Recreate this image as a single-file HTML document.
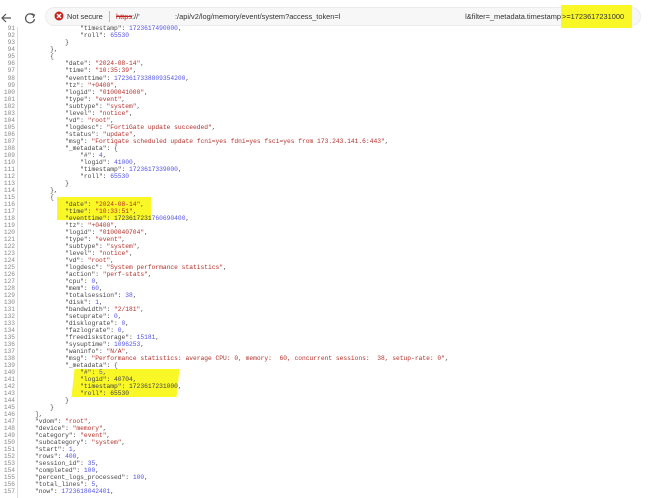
<!DOCTYPE html>
<html><head><meta charset="utf-8"><style>
*{margin:0;padding:0;box-sizing:border-box}
body{width:649px;height:498px;overflow:hidden;background:#fff;position:relative;font-family:"Liberation Mono",monospace}
.hl{position:absolute;background:#f9f726}
#bar{position:absolute;left:45px;top:7px;width:596px;height:19px;border-radius:10px;background:#f7f7f7;border:1px solid #ececec}
.ut{position:absolute;top:12px;font:7.4px "Liberation Sans",sans-serif;color:#333;white-space:pre}
#gut{position:absolute;left:0;top:25.4px;width:15px;text-align:right;font-size:6.2px;line-height:7.02px;color:#888;white-space:pre}
#vl{position:absolute;left:17px;top:27px;width:1px;height:471px;background:#ddd}
#code{position:absolute;left:20px;top:25.4px;font-size:6.28px;line-height:7.02px;color:#444;white-space:pre}
.s{color:#b3302a}.n{color:#5252e6}
</style></head><body>
<div class="hl" style="left:57px;top:197px;width:94px;height:23px"></div>
<div class="hl" style="left:73px;top:369px;width:105px;height:28px;transform:skewX(-6deg)"></div>
<div id="bar"></div>
<svg style="position:absolute;left:0;top:10px" width="40" height="16" viewBox="0 0 40 16"><path d="M11 8H2M6 4L2 8l4 4" stroke="#555" stroke-width="1.2" fill="none"/><path d="M33.5 5.5A4.5 4.5 0 1 0 34.5 9" stroke="#555" stroke-width="1.2" fill="none"/><path d="M31.5 3.5l3 1.5-1.5 2.8" stroke="#555" stroke-width="1.2" fill="none"/></svg>
<div class="hl" style="left:561px;top:5px;width:71px;height:23px"></div>
<svg style="position:absolute;left:54px;top:11px" width="10" height="10"><circle cx="5" cy="5" r="4.5" fill="#c5221f"/><path d="M3 3l4 4M7 3L3 7" stroke="#fff" stroke-width="1.3"/></svg>
<div class="ut" style="left:67px">Not secure</div>
<div style="position:absolute;left:109px;top:11px;width:1px;height:11px;background:#bbb"></div>
<div class="ut" style="left:116px"><span style="color:#c5221f;text-decoration:line-through">https</span>://'</div>
<div class="ut" style="left:175px">:/api/v2/log/memory/event/system?access_token=l</div>
<div class="ut" style="right:88px">l&amp;filter=_metadata.timestamp</div>
<div class="ut" style="left:562px">&gt;=1723617231000</div>
<div id="vl"></div>
<div id="gut"></div>
<div id="code"><span>                "timestamp": <span class="n">1723617490000</span>,
                "roll": <span class="n">65530</span>
            }
        },
        {
            "date": <span class="s">"2024-08-14"</span>,
            "time": <span class="s">"10:35:39"</span>,
            "eventtime": <span class="n">1723617338809354200</span>,
            "tz": <span class="s">"+0400"</span>,
            "logid": <span class="s">"0100041000"</span>,
            "type": <span class="s">"event"</span>,
            "subtype": <span class="s">"system"</span>,
            "level": <span class="s">"notice"</span>,
            "vd": <span class="s">"root"</span>,
            "logdesc": <span class="s">"FortiGate update succeeded"</span>,
            "status": <span class="s">"update"</span>,
            "msg": <span class="s">"Fortigate scheduled update fcni=yes fdni=yes fsci=yes from 173.243.141.6:443"</span>,
            "_metadata": {
                "#": <span class="n">4</span>,
                "logid": <span class="n">41000</span>,
                "timestamp": <span class="n">1723617339000</span>,
                "roll": <span class="n">65530</span>
            }
        },
        {
            "date": <span class="s">"2024-08-14"</span>,
            "time": <span class="s">"10:33:51"</span>,
            "eventtime": <span>1723617231</span><span class="n">760690400</span>,
            "tz": <span class="s">"+0400"</span>,
            "logid": <span class="s">"0100040704"</span>,
            "type": <span class="s">"event"</span>,
            "subtype": <span class="s">"system"</span>,
            "level": <span class="s">"notice"</span>,
            "vd": <span class="s">"root"</span>,
            "logdesc": <span class="s">"System performance statistics"</span>,
            "action": <span class="s">"perf-stats"</span>,
            "cpu": <span class="n">0</span>,
            "mem": <span class="n">60</span>,
            "totalsession": <span class="n">38</span>,
            "disk": <span class="n">1</span>,
            "bandwidth": <span class="s">"2/181"</span>,
            "setuprate": <span class="n">0</span>,
            "disklograte": <span class="n">0</span>,
            "fazlograte": <span class="n">0</span>,
            "freediskstorage": <span class="n">15181</span>,
            "sysuptime": <span class="n">1096253</span>,
            "waninfo": <span class="s">"N/A"</span>,
            "msg": <span class="s">"Performance statistics: average CPU: 0, memory:  60, concurrent sessions:  38, setup-rate: 0"</span>,
            "_metadata": {
                "#": <span class="n">5</span>,
                "logid": 40704,
                "timestamp": 1723617231000,
                "roll": 65530
            }
        }
    ],
    "vdom": <span class="s">"root"</span>,
    "device": <span class="s">"memory"</span>,
    "category": <span class="s">"event"</span>,
    "subcategory": <span class="s">"system"</span>,
    "start": <span class="n">1</span>,
    "rows": <span class="n">400</span>,
    "session_id": <span class="n">35</span>,
    "completed": <span class="n">100</span>,
    "percent_logs_processed": <span class="n">100</span>,
    "total_lines": <span class="n">5</span>,
    "now": <span class="n">1723618042401</span>,</span></div>
<script>
var g=document.getElementById('gut'),t='';for(var i=91;i<=157;i++)t+=i+'\n';g.textContent=t;
</script>
</body></html>
